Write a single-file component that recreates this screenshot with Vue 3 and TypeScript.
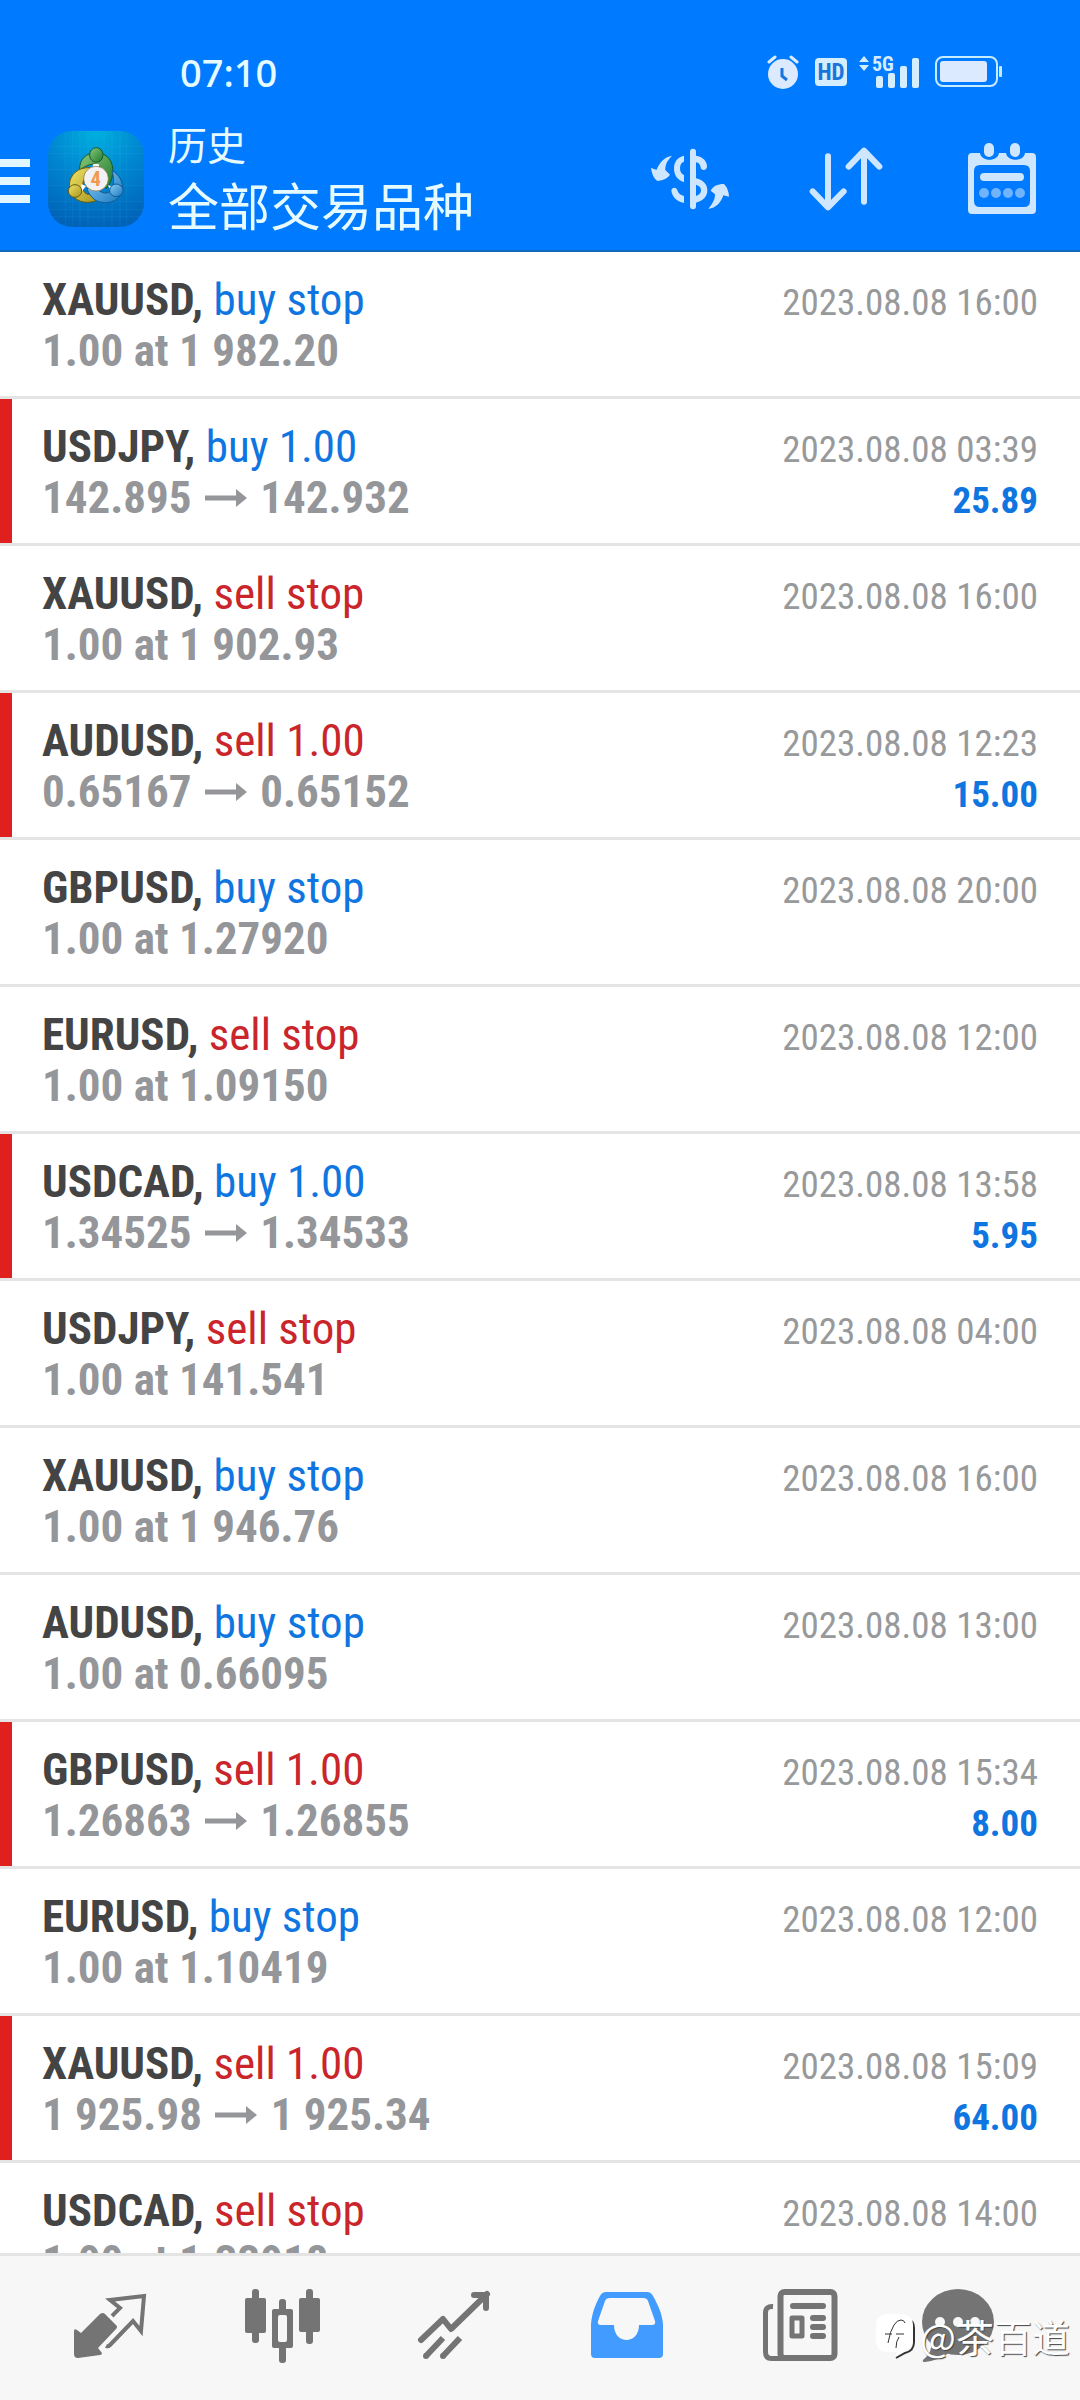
<script setup lang="ts">
interface Deal {
  symbol: string
  side: 'buy' | 'sell'
  action: string
  from: string
  to?: string
  time: string
  profit?: string
}

const deals: Deal[] = [
  { symbol: 'XAUUSD', side: 'buy', action: 'buy stop', from: '1.00 at 1 982.20', time: '2023.08.08 16:00' },
  { symbol: 'USDJPY', side: 'buy', action: 'buy 1.00', from: '142.895', to: '142.932', time: '2023.08.08 03:39', profit: '25.89' },
  { symbol: 'XAUUSD', side: 'sell', action: 'sell stop', from: '1.00 at 1 902.93', time: '2023.08.08 16:00' },
  { symbol: 'AUDUSD', side: 'sell', action: 'sell 1.00', from: '0.65167', to: '0.65152', time: '2023.08.08 12:23', profit: '15.00' },
  { symbol: 'GBPUSD', side: 'buy', action: 'buy stop', from: '1.00 at 1.27920', time: '2023.08.08 20:00' },
  { symbol: 'EURUSD', side: 'sell', action: 'sell stop', from: '1.00 at 1.09150', time: '2023.08.08 12:00' },
  { symbol: 'USDCAD', side: 'buy', action: 'buy 1.00', from: '1.34525', to: '1.34533', time: '2023.08.08 13:58', profit: '5.95' },
  { symbol: 'USDJPY', side: 'sell', action: 'sell stop', from: '1.00 at 141.541', time: '2023.08.08 04:00' },
  { symbol: 'XAUUSD', side: 'buy', action: 'buy stop', from: '1.00 at 1 946.76', time: '2023.08.08 16:00' },
  { symbol: 'AUDUSD', side: 'buy', action: 'buy stop', from: '1.00 at 0.66095', time: '2023.08.08 13:00' },
  { symbol: 'GBPUSD', side: 'sell', action: 'sell 1.00', from: '1.26863', to: '1.26855', time: '2023.08.08 15:34', profit: '8.00' },
  { symbol: 'EURUSD', side: 'buy', action: 'buy stop', from: '1.00 at 1.10419', time: '2023.08.08 12:00' },
  { symbol: 'XAUUSD', side: 'sell', action: 'sell 1.00', from: '1 925.98', to: '1 925.34', time: '2023.08.08 15:09', profit: '64.00' },
  { symbol: 'USDCAD', side: 'sell', action: 'sell stop', from: '1.00 at 1.33918', time: '2023.08.08 14:00' },
]
</script>

<template>
  <div class="screen">
    <header class="top">
      <div class="status">
        <span class="clock">07:10</span>
        <div class="indicators">
          <svg width="32" height="34" viewBox="0 0 32 34" aria-hidden="true">
            <circle cx="16" cy="19" r="15" fill="#dbeaff" />
            <path d="M2 7 8 2M30 7 24 2" stroke="#dbeaff" stroke-width="3" stroke-linecap="round" />
            <path d="M15 13v8l5 4" fill="none" stroke="#1a74dc" stroke-width="3" />
          </svg>
          <svg width="32" height="28" viewBox="0 0 32 28" aria-hidden="true">
            <rect width="32" height="28" rx="4" fill="#d5eeff" />
            <text x="16" y="22" text-anchor="middle" class="hd-text">HD</text>
          </svg>
          <svg class="signal" width="60" height="33" viewBox="0 0 60 33" aria-hidden="true">
            <path d="M0 6 5 0 10 6zM0 9h10L5 15z" fill="#d5eeff" />
            <text x="13" y="15" class="net-text">5G</text>
            <rect x="17" y="20" width="7" height="12" rx="2" fill="#d5eeff" />
            <rect x="29" y="17" width="7" height="15" rx="2" fill="#d5eeff" />
            <rect x="41" y="10" width="7" height="22" rx="2" fill="#d5eeff" />
            <rect x="53" y="2" width="7" height="30" rx="2" fill="#d5eeff" />
          </svg>
          <svg width="67" height="32" viewBox="0 0 67 32" aria-hidden="true">
            <rect x="1" y="1" width="61" height="29" rx="7" fill="none" stroke="#c8ecff" stroke-width="2" />
            <rect x="5" y="5" width="47" height="21" rx="3" fill="#dbeaff" />
            <rect x="64" y="10" width="3" height="11" rx="1" fill="#c8ecff" />
          </svg>
        </div>
      </div>

      <div class="appbar">
        <button class="icon-btn" aria-label="菜单">
          <svg width="30" height="48" viewBox="0 0 30 48">
            <path d="M0 4h30v8H0zM0 22h30v8H0zM0 40h30v8H0z" fill="#e2f6ff" />
          </svg>
        </button>
        <svg class="logo" width="96" height="96" viewBox="24 33 288 288" aria-hidden="true">
          <defs>
            <radialGradient id="tile" cx="0.5" cy="0" r="1">
              <stop offset="0" stop-color="#00b0e0" />
              <stop offset="0.5" stop-color="#0086d0" />
              <stop offset="1" stop-color="#0063b8" />
            </radialGradient>
            <linearGradient id="green" x1="0" y1="0" x2="1" y2="1">
              <stop offset="0" stop-color="#8cc87a" />
              <stop offset="1" stop-color="#1c7a30" />
            </linearGradient>
            <linearGradient id="yellow" x1="0" y1="0" x2="1" y2="1">
              <stop offset="0" stop-color="#f0e468" />
              <stop offset="1" stop-color="#a8941c" />
            </linearGradient>
            <linearGradient id="azure" x1="0" y1="0" x2="1" y2="1">
              <stop offset="0" stop-color="#8cccf4" />
              <stop offset="1" stop-color="#1878c0" />
            </linearGradient>
          </defs>
          <rect x="24" y="33" width="288" height="288" rx="72" fill="url(#tile)" />
          <path d="M76 36v282M98 33v288M120 33v288M144 33v288M192 33v288M216 33v288M240 33v288M260 36v282M27 80h282M24 100h288M24 148h288M24 196h288M24 244h288M24 268h288M30 290h276" stroke="#5cc8f0" stroke-opacity="0.15" stroke-width="2" />
          <g stroke-width="3">
            <path d="M119 150c-2-32 20-52 49-52 34 0 54 28 50 62-2 20-8 34-20 46l-16-24c8-30 0-50-18-50-14 0-28 6-45 18z" fill="url(#green)" stroke="#175c28" />
            <path d="M150 143c-34-2-62 20-62 54 0 30 24 50 54 50 14 0 24-3 32-9l-16-16c-12 4-24 0-28-12-6-20 4-44 20-67z" fill="url(#yellow)" stroke="#665a10" />
            <path d="M216 152c20 10 33 32 31 54-2 26-24 42-50 42-28 0-46-14-56-42l28-6c8 16 22 22 36 18 16-8 20-34 11-66z" fill="url(#azure)" stroke="#125a94" />
            <path d="M158 134q10-6 20 0l-3 10h-14zM124 192l14 6-14 18zM204 196l10 20 6-16z" fill="#fff" stroke="none" />
            <ellipse cx="169" cy="105" rx="20" ry="22" fill="url(#green)" stroke="#175c28" />
            <ellipse cx="105" cy="213" rx="20" ry="19" fill="url(#yellow)" stroke="#665a10" />
            <ellipse cx="229" cy="211" rx="20" ry="19" fill="url(#azure)" stroke="#125a94" />
          </g>
          <circle cx="168" cy="176" r="37" fill="#f2f2f4" stroke="#8a6a30" stroke-width="2" />
          <text x="167" y="199" text-anchor="middle" class="logo-text">4</text>
        </svg>
        <h1 class="titles">
          <span class="section">历史</span>
          <span class="filter">全部交易品种</span>
        </h1>
        <div class="actions">
          <button class="icon-btn" aria-label="货币">
            <svg width="80" height="66" viewBox="30 42 240 198" fill="#cfe6ff">
              <rect x="150" y="50" width="18" height="182" rx="9" />
              <path d="M132 71c-20 4-30 20-30 38 0 20 10 36 30 41v-21c-8-3-12-10-12-20s4-18 12-20z" />
              <path d="M168 71c20 3 34 16 33 34-2 12-18 12-19 1-1-8-6-14-14-15z" />
              <path d="M168 139c22 5 34 18 34 36s-12 32-34 37v-20c10-3 15-8 15-17s-5-14-15-17z" />
              <path d="M132 213c-22-4-36-18-38-38 2-11 16-10 18 0 2 8 8 14 20 17z" />
              <path d="M96 71C80 88 76 98 76 114l14 14q-10 16-38 19-16-12-19-40 8 4 17 6c8-20 22-38 46-42z" />
              <path d="M205 231c16-20 20-30 20-44l-13-11c8-14 20-20 40-20q14 14 15 38l-17-4c-7 22-22 38-45 41z" />
            </svg>
          </button>
          <button class="icon-btn" aria-label="排序">
            <svg width="80" height="66" viewBox="498 46 240 198" fill="none" stroke="#cfe6ff" stroke-width="18" stroke-linecap="round" stroke-linejoin="round">
              <path d="M564 77v152M518 182l46 48 47-48M672 213V62M626 108l46-48 46 48" />
            </svg>
          </button>
          <button class="icon-btn" aria-label="日期">
            <svg width="80" height="74" viewBox="0 0 80 74">
              <path fill="#cfe6ff" fill-rule="evenodd" d="M10 11h8c1 9 18 9 19 0h7c1 9 18 9 19 0h7q4 0 4 4v53q0 4-4 4H10q-4 0-4-4V15q0-4 4-4zM18 23q-6 0-6 6v30q0 6 6 6h44q6 0 6-6V29q0-6-6-6z" />
              <rect x="22" y="1" width="10" height="14" rx="5" fill="#cfe6ff" />
              <rect x="48" y="1" width="10" height="14" rx="5" fill="#cfe6ff" />
              <rect x="18" y="31" width="44" height="8" rx="4" fill="#cfe6ff" />
              <g fill="#70b4ff">
                <circle cx="22" cy="51" r="5" /><circle cx="34" cy="51" r="5" /><circle cx="46" cy="51" r="5" /><circle cx="58" cy="51" r="5" />
              </g>
            </svg>
          </button>
        </div>
      </div>
    </header>

    <ul class="deals">
      <li v-for="(deal, i) in deals" :key="i" class="deal" :class="{ closed: deal.profit }">
        <div class="info">
          <p class="name"><b>{{ deal.symbol }},</b> <span :class="deal.side">{{ deal.action }}</span></p>
          <p class="price">
            {{ deal.from }}
            <template v-if="deal.to">
              <svg class="arrow" width="44" height="18" viewBox="0 0 44 18" role="img" aria-label="→">
                <path d="M1 6.500h31V0l11 9-11 9v-6.500H1z" fill="#949699" />
              </svg>
              {{ deal.to }}
            </template>
          </p>
        </div>
        <div class="result">
          <time>{{ deal.time }}</time>
          <strong v-if="deal.profit">{{ deal.profit }}</strong>
        </div>
      </li>
    </ul>

    <nav class="tabs">
      <button class="icon-btn" aria-label="行情">
        <svg width="80" height="80" viewBox="0 0 80 80">
          <path d="M4 43q0-3 3-1l4 3 19-19q3-2 5 0l11 11q2 2 0 4L28 60l4 5q0 2-2 2L8 70q-4 0-4-4z" fill="#747474" />
          <path d="M42 28l8-8-10-8 34-4-3 35-8-10-23 24q-2 2-4 1" fill="none" stroke="#747474" stroke-width="4" />
        </svg>
      </button>
      <button class="icon-btn" aria-label="图表">
        <svg width="80" height="80" viewBox="0 0 80 80" fill="#747474">
          <rect x="9" y="1" width="7" height="54" rx="3" /><rect x="2" y="10" width="21" height="35" rx="2" />
          <rect x="36" y="11" width="7" height="64" rx="3" /><rect x="29" y="21" width="21" height="39" rx="2" />
          <rect x="35" y="27" width="9" height="27" rx="2" fill="#f7f7f7" />
          <rect x="63" y="1" width="7" height="55" rx="3" /><rect x="56" y="10" width="21" height="34" rx="2" />
        </svg>
      </button>
      <button class="icon-btn" aria-label="交易">
        <svg width="80" height="80" viewBox="0 0 80 80" fill="none" stroke="#747474" stroke-width="6">
          <path d="M6 52 28 31 36 41 72 6M59 7h12v13" stroke-linecap="round" stroke-linejoin="round" />
          <path d="M11 68 28 50M28 68 45 50" />
          <path d="M11 68h0M28 68h0" stroke-linecap="round" />
        </svg>
      </button>
      <button class="icon-btn" aria-label="历史" aria-current="page">
        <svg width="80" height="80" viewBox="0 0 80 80">
          <path fill="#429bff" fill-rule="evenodd" d="M19 4h41q4 0 6 4c5 9 9 17 10 28v30q0 4-4 4H8q-4 0-4-4V36C5 25 8 17 13 8q2-4 6-4zM23 10q-4 0-5 3l-7 20q-1 4 3 4h13c0 20 25 20 25 0h13q4 0 3-4l-7-20q-1-3-5-3z" />
        </svg>
      </button>
      <button class="icon-btn" aria-label="新闻">
        <svg width="80" height="80" viewBox="0 0 80 80">
          <rect x="20.500" y="4" width="54" height="66" rx="4" fill="none" stroke="#747474" stroke-width="6" />
          <path d="M13 18.500Q5.500 18 5.500 25v39q0 6.500 6 6.500H24" fill="none" stroke="#747474" stroke-width="5" />
          <rect x="32" y="30" width="10" height="18" fill="none" stroke="#747474" stroke-width="5" stroke-linejoin="round" />
          <path d="M33 18h30M53 30h10M53 39h10M53 48h10" stroke="#747474" stroke-width="6" stroke-linecap="round" />
        </svg>
      </button>
      <button class="icon-btn" aria-label="消息">
        <svg width="80" height="80" viewBox="0 0 80 80">
          <ellipse cx="40" cy="34" rx="36" ry="33" fill="#747474" />
          <path d="M13 54q2 10-8 18-1 2 2 2 12-1 24-9z" fill="#747474" />
          <g fill="#f7f7f7"><circle cx="22" cy="34" r="5" /><circle cx="40" cy="34" r="5" /><circle cx="57" cy="34" r="5" /></g>
        </svg>
      </button>
      <div class="watermark">
        <svg width="40" height="46" viewBox="0 0 40 46" aria-hidden="true">
          <path d="M36 8q2 3 2 7v14q0 9-9 11l-9 5" fill="none" stroke="#333" stroke-width="2" />
          <path d="M12 1h13q12 0 12 12v14q0 9-9 11l-9 6 2-5H12Q0 39 0 27V13Q0 1 12 1z" fill="#fff" />
          <path d="M12 30q2-12 6-18 3-5 7-5 3 0 4 3M9 21h7M20 21h8M20 35q0-7 3-11" fill="none" stroke="#333" stroke-width="1" />
        </svg>
        <span>@茶百道</span>
      </div>
    </nav>
  </div>
</template>

<style>
body {
  margin: 0;
  background: #fff;
}
</style>

<style scoped>
.screen {
  display: flex;
  flex-direction: column;
  height: 100vh;
  overflow: hidden;
  background: #fff;
  font-family: "Roboto Condensed", Roboto, "Noto Sans CJK SC", sans-serif;
}

.icon-btn {
  display: flex;
  align-items: center;
  justify-content: center;
  padding: 0;
  border: 0;
  background: none;
}

.top {
  flex: none;
  background: #007aff;
  border-bottom: 2px solid #1268bc;
}

.status {
  display: flex;
  align-items: center;
  justify-content: space-between;
  box-sizing: border-box;
  height: 108px;
  padding: 36px 78px 0 180px;
}

.clock {
  font: 500 38px/48px "Noto Sans", sans-serif;
  color: #e6fbff;
}

.indicators {
  display: flex;
  align-items: center;
  gap: 16px;
}

.signal {
  margin-left: -4px;
  overflow: visible;
}

.hd-text {
  font: 700 23px "Roboto Condensed", Roboto, sans-serif;
  fill: #1a74dc;
}

.net-text {
  font: 700 20px "Roboto Condensed", Roboto, sans-serif;
  fill: #d5eeff;
}

.logo-text {
  font: 700 62px "Roboto Condensed", Roboto, sans-serif;
  fill: #f09a50;
}

.appbar {
  display: flex;
  align-items: center;
  height: 142px;
  padding-right: 38px;
}

.logo {
  flex: none;
  margin: 0 24px 0 18px;
}

.titles {
  display: flex;
  flex: 1;
  flex-direction: column;
  margin: 0;
  padding-bottom: 4px;
  font-family: "Noto Sans CJK SC", sans-serif;
  font-weight: 400;
  color: #e6fbff;
  white-space: nowrap;
}

.section {
  font-size: 39px;
  line-height: 54px;
}

.filter {
  font-size: 51px;
  line-height: 68px;
}

.actions {
  display: flex;
  gap: 76px;
}

.deals {
  flex: 1;
  min-height: 0;
  margin: 0;
  padding: 0;
  overflow: hidden;
  list-style: none;
}

.deal {
  display: flex;
  justify-content: space-between;
  box-sizing: border-box;
  height: 147px;
  padding-right: 42px;
  border-bottom: 3px solid #e4e4e4;
}

.deal::before {
  width: 12px;
  content: "";
}

.closed::before {
  background: #e01f1f;
}

.info {
  flex: 1;
  padding: 22px 0 0 30px;
}

.info p {
  margin: 0;
  font-size: 45px;
  line-height: 51px;
  white-space: nowrap;
}

.name {
  color: #444;
}

.buy {
  color: #0f75e0;
}

.sell {
  color: #c9252b;
}

.info .price {
  font-weight: 700;
  color: #949699;
}

.arrow {
  margin: 0 2px;
  vertical-align: 6px;
}

.result {
  display: flex;
  flex-direction: column;
  align-items: flex-end;
  padding-top: 25px;
  font-size: 37px;
  line-height: 51px;
  color: #97999b;
}

.result strong {
  color: #0f75e0;
}

.tabs {
  position: relative;
  display: grid;
  flex: none;
  grid-template-columns: repeat(5, 1fr) 144px;
  align-items: center;
  height: 144px;
  padding: 0 50px 0 24px;
  border-top: 3px solid #e4e4e4;
  background: #f7f7f7;
}

.watermark {
  position: absolute;
  right: 10px;
  bottom: 36px;
  display: flex;
  align-items: center;
  gap: 4px;
  font: 400 38px/56px "Noto Sans CJK SC", sans-serif;
  color: #fff;
  text-shadow: 1px 1px 1px #444;
  pointer-events: none;
}
</style>
